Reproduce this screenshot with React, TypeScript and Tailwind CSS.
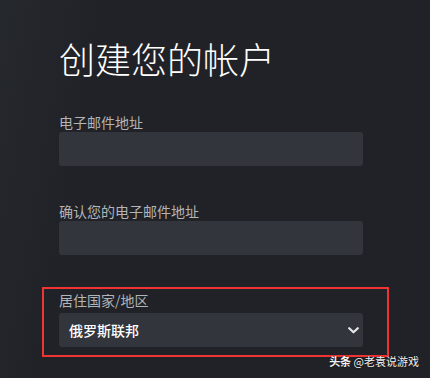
const FONT = '"Noto Sans CJK SC", "Noto Sans", "Liberation Sans", sans-serif';

function Field({ label, children }: { label: string; children?: React.ReactNode }) {
  return (
    <div className="flex flex-col">
      <label className="text-[14px] leading-[16px] text-[#b2b4b7]">{label}</label>
      {children}
    </div>
  );
}

function TextBox() {
  return <div className="mt-[2px] h-[34px] w-[304px] rounded-[3px] bg-[#32353c]" />;
}

export default function App() {
  return (
    <div
      className="relative h-[378px] w-[430px] overflow-hidden bg-[#202227] bg-[linear-gradient(100deg,#25282d_0%,#202227_22%,#202227_100%)]"
      style={{ fontFamily: FONT }}
    >
      <div className="flex flex-col pl-[59px] pt-[40px]">
        <h1 className="text-[36px] font-light leading-[36px] text-white">创建您的帐户</h1>

        <div className="mt-[38px]">
          <Field label="电子邮件地址">
            <TextBox />
          </Field>
        </div>

        <div className="mt-[37px]">
          <Field label="确认您的电子邮件地址">
            <TextBox />
          </Field>
        </div>

        {/* highlighted country selector */}
        <div className="-ml-[17px] mt-[32px] w-[347px] border-2 border-[#f03434] pb-[8px] pl-[15px] pr-[24px] pt-[3px]">
          <Field label="居住国家/地区">
            <div className="mt-[5px] flex h-[34px] w-[304px] items-center justify-between rounded-[3px] bg-[#32353c] pl-[10px] pr-[4px]">
              <span className="text-[14px] font-medium leading-[16px] text-white">俄罗斯联邦</span>
              <svg width="11" height="7" viewBox="0 0 11 7" fill="none">
                <path d="M1.2 1.2 L5.5 5.3 L9.8 1.2" stroke="#e6e6e6" strokeWidth="2.2" strokeLinecap="round" strokeLinejoin="round" />
              </svg>
            </div>
          </Field>
        </div>
      </div>

      {/* watermark */}
      <div className="absolute bottom-[10px] right-[11px] text-[11px] leading-[13px] text-[#f2f2f2] [text-shadow:0_0_2px_rgba(0,0,0,0.8)]">
        <span className="font-bold">头条</span> @老袁说游戏
      </div>
    </div>
  );
}
